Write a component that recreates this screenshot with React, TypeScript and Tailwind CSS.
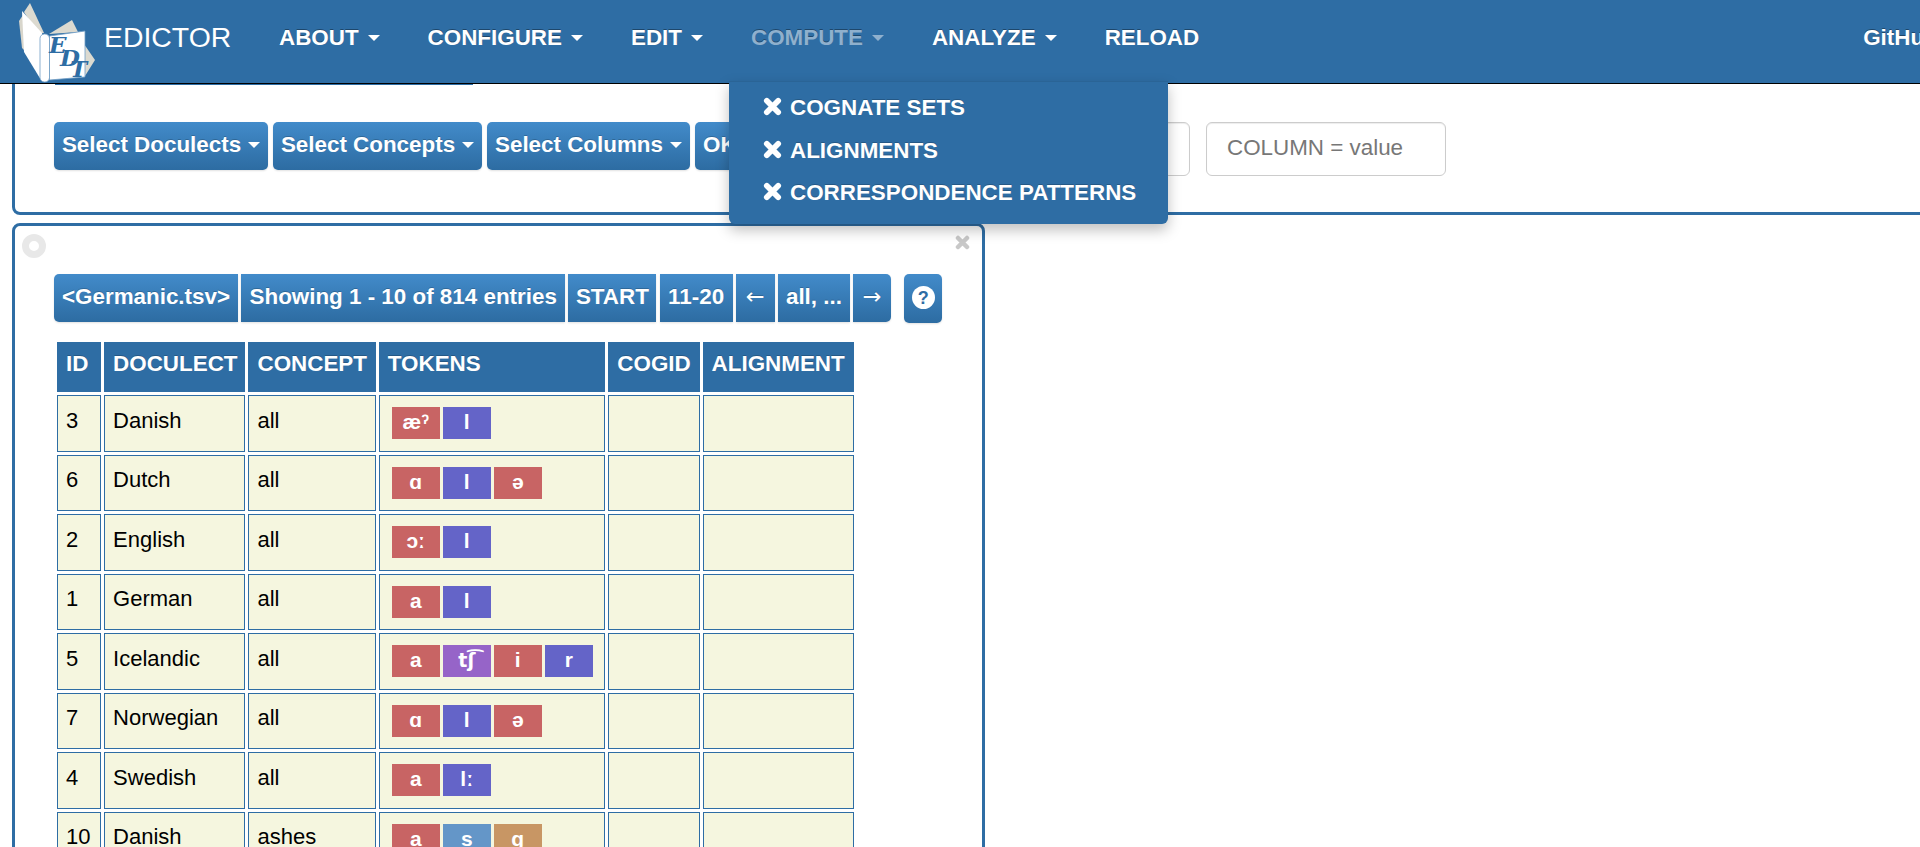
const sans = "font-['Liberation_Sans',Arial,sans-serif]";

type Tok = { t: string; c: string };
const R = "bg-[#c86464]";
const B = "bg-[#6464c8]";
const P = "bg-[#9664c8]";
const S = "bg-[#6496c8]";
const Q = "bg-[#c89664]";

const rows: { id: string; doc: string; con: string; toks: Tok[] }[] = [
  { id: "3", doc: "Danish", con: "all", toks: [{ t: "æˀ", c: R }, { t: "l", c: B }] },
  { id: "6", doc: "Dutch", con: "all", toks: [{ t: "ɑ", c: R }, { t: "l", c: B }, { t: "ə", c: R }] },
  { id: "2", doc: "English", con: "all", toks: [{ t: "ɔː", c: R }, { t: "l", c: B }] },
  { id: "1", doc: "German", con: "all", toks: [{ t: "a", c: R }, { t: "l", c: B }] },
  { id: "5", doc: "Icelandic", con: "all", toks: [{ t: "a", c: R }, { t: "tʃ͡", c: P }, { t: "i", c: R }, { t: "r", c: B }] },
  { id: "7", doc: "Norwegian", con: "all", toks: [{ t: "ɑ", c: R }, { t: "l", c: B }, { t: "ə", c: R }] },
  { id: "4", doc: "Swedish", con: "all", toks: [{ t: "a", c: R }, { t: "lː", c: B }] },
  { id: "10", doc: "Danish", con: "ashes", toks: [{ t: "a", c: R }, { t: "s", c: S }, { t: "ɡ", c: Q }] },
];

function Caret({ className = "border-t-white" }: { className?: string }) {
  return <span className={`inline-block w-0 h-0 border-x-[6px] border-x-transparent border-t-[6px] ${className}`} />;
}

function NavItem({ label, caret = true, muted = false }: { label: string; caret?: boolean; muted?: boolean }) {
  return (
    <a className={`flex items-center gap-[9px] px-[24px] pt-[22px] leading-[32px] h-[54px] font-bold text-[22.4px] whitespace-nowrap shrink-0 ${muted ? "text-[#8fb0cd]" : "text-white"} [text-shadow:0_-1px_0_rgba(0,0,0,0.35)]`}>
      {label}
      {caret && <Caret className={muted ? "border-t-[#8fb0cd]" : "border-t-white"} />}
    </a>
  );
}

function Logo() {
  return (
    <svg viewBox="0 0 100 84" className="w-[100px] h-[84px] shrink-0">
      <polygon points="30,3 44,33 38,34 24,12" fill="#dcdad0" />
      <polygon points="19,21 23,15 26,52 22,48" fill="#d8d6cc" />
      <polygon points="49,34 72,20 78,32" fill="#dcdad0" />
      <polygon points="84,44 95,60 85,76" fill="#dcdad0" />
      <polygon points="22,11 42,33 41,80 24,52" fill="#ffffff" />
      <rect x="40" y="34" width="9.5" height="48" rx="4.5" fill="#ffffff" stroke="#6f9cc4" strokeWidth="0.8" />
      <polygon points="49.5,36 85,31 85,77 49.5,80" fill="#ffffff" stroke="#6f9cc4" strokeWidth="0.8" />
      <g fontFamily="'DejaVu Serif', serif" fontWeight="700" fontStyle="italic" fontSize="23" fill="#2e6da4">
        <text x="49" y="53">E</text>
        <text x="60" y="66">D</text>
        <text x="70" y="77">T</text>
      </g>
    </svg>
  );
}

function Cross({ className }: { className: string }) {
  return (
    <svg viewBox="0 0 20 20" className={className}>
      <path d="M4 4 L16 16 M16 4 L4 16" stroke="currentColor" strokeWidth="6" strokeLinecap="round" fill="none" />
    </svg>
  );
}

const btn =
  "flex items-center justify-center h-[48px] pb-[2px] bg-gradient-to-b from-[#428bca] to-[#2d6ca2] text-white font-bold text-[22.4px] [text-shadow:0_-1px_0_rgba(0,0,0,0.2)] shadow-[0_1px_2px_rgba(0,0,0,0.12)] whitespace-nowrap shrink-0";

const arrow = "font-['DejaVu_Sans',sans-serif] !font-normal";

function SelectBtn({ label, w }: { label: string; w: string }) {
  return (
    <div className={`${btn} ${w} gap-[7px] rounded-[5px]`}>
      {label}
      <Caret />
    </div>
  );
}

const th = "bg-[#2e6da4] text-white font-bold text-[22.4px] text-left align-top pt-[4px] pl-[8px] border border-[#2e6da4] [text-shadow:0_-1px_0_rgba(0,0,0,0.2)] whitespace-nowrap";
const td = "bg-[#f5f6df] border border-[#2e6da4] text-[22px] text-black pl-[8px] pb-[6px] align-middle whitespace-nowrap";

export default function App() {
  return (
    <div className={`relative w-[1920px] h-[847px] overflow-hidden bg-white ${sans}`}>
      <nav className="flex items-start h-[84px] bg-[#2e6da4] border-b border-black overflow-hidden">
        <div className="flex items-start w-[255px] shrink-0">
          <Logo />
          <span className="ml-[4px] mt-[18px] text-[28.4px] leading-[38px] font-light text-white">EDICTOR</span>
        </div>
        <NavItem label="ABOUT" />
        <NavItem label="CONFIGURE" />
        <NavItem label="EDIT" />
        <NavItem label="COMPUTE" muted />
        <NavItem label="ANALYZE" />
        <NavItem label="RELOAD" caret={false} />
        <div className="ml-[616px]">
          <NavItem label="GitHub" caret={false} />
        </div>
      </nav>

      <div className="ml-3 -mr-4 h-[131px] border-x-[3px] border-b-[3px] border-[#2e6da4] rounded-b-[8px]">
        <div className="ml-[40px] w-[418px] h-[1px] bg-[#2e6da4]" />
        <div className="flex items-start ml-[39px] mt-[37px]">
          <SelectBtn label="Select Doculects" w="w-[214px]" />
          <div className="w-[5px] shrink-0" />
          <SelectBtn label="Select Concepts" w="w-[209px]" />
          <div className="w-[5px] shrink-0" />
          <SelectBtn label="Select Columns" w="w-[203px]" />
          <div className="w-[5px] shrink-0" />
          <div className={`${btn} w-[100px] rounded-[5px] !justify-start pl-[8px]`}>OK</div>
          <input
            placeholder="Filter"
            className="ml-[103px] w-[292px] h-[54px] shrink-0 border border-[#ccc] rounded-[6px] px-[20px] pb-[2px] text-[22.4px] outline-none shadow-[inset_0_1px_1px_rgba(0,0,0,0.075)] placeholder:text-[#777]"
          />
          <input
            placeholder="COLUMN = value"
            className="ml-[16px] w-[240px] h-[54px] shrink-0 border border-[#ccc] rounded-[6px] px-[20px] pb-[2px] text-[22.4px] outline-none shadow-[inset_0_1px_1px_rgba(0,0,0,0.075)] placeholder:text-[#777]"
          />
        </div>
      </div>

      <div className="relative ml-3 mt-2 w-[973px] h-[640px] border-[3px] border-[#2e6da4] rounded-[8px] pl-[39px] pt-[48px]">
        <div className="absolute left-[7px] top-[8px] w-[24px] h-[24px] rounded-full border-[7px] border-[#e8e8e8] bg-white" />
        <Cross className="absolute left-[940px] top-[9px] w-[15px] h-[15px] text-[#c8c8c8]" />

        <div className="flex items-start">
          <div className="flex gap-[3.2px]">
            <div className={`${btn} w-[184px] rounded-l-[5px]`}>&lt;Germanic.tsv&gt;</div>
            <div className={`${btn} w-[324px]`}>Showing 1 - 10 of 814 entries</div>
            <div className={`${btn} w-[88px]`}>START</div>
            <div className={`${btn} w-[73px]`}>11-20</div>
            <div className={`${btn} ${arrow} w-[39px]`}>←</div>
            <div className={`${btn} w-[72px]`}>all, ...</div>
            <div className={`${btn} ${arrow} w-[38px] rounded-r-[5px]`}>→</div>
          </div>
          <div className={`${btn} ml-[13px] w-[38px] !h-[49px] rounded-[5px]`}>
            <span className="flex items-center justify-center w-[23px] h-[23px] rounded-full bg-white text-[#2e6da4] text-[18px] font-bold leading-none [text-shadow:none]">?</span>
          </div>
        </div>

        <table className="mt-[16px] border-separate border-spacing-[3.2px] table-fixed w-[803px]">
          <thead>
            <tr className="h-[50px]">
              <th className={`${th} w-[44px]`}>ID</th>
              <th className={`${th} w-[141px]`}>DOCULECT</th>
              <th className={`${th} w-[127px]`}>CONCEPT</th>
              <th className={`${th} w-[226px]`}>TOKENS</th>
              <th className={`${th} w-[91px]`}>COGID</th>
              <th className={`${th} w-[151px]`}>ALIGNMENT</th>
            </tr>
          </thead>
          <tbody>
            {rows.map((r) => (
              <tr key={r.id} className="h-[56.5px]">
                <td className={td}>{r.id}</td>
                <td className={td}>{r.doc}</td>
                <td className={td}>{r.con}</td>
                <td className={`${td} !pl-[12px] !pb-0`}>
                  <div className="flex gap-[3px]">
                    {r.toks.map((k, i) => (
                      <span
                        key={i}
                        className={`${k.c} w-[48px] h-[32px] flex items-start justify-center text-white font-bold leading-[30px] ${k.t === "tʃ͡" ? "font-['DejaVu_Sans',sans-serif] text-[19px]" : "text-[21px]"}`}
                      >
                        {k.t}
                      </span>
                    ))}
                  </div>
                </td>
                <td className={td} />
                <td className={td} />
              </tr>
            ))}
          </tbody>
        </table>
      </div>

      <div className="absolute left-[729px] top-[81px] w-[439px] h-[143px] bg-[#2e6da4] rounded-b-[6px] border-t border-[#2a6496] shadow-[0_6px_14px_rgba(0,0,0,0.25)] pt-[5px] pl-[34px] text-white font-bold text-[22.4px]">
        {["COGNATE SETS", "ALIGNMENTS", "CORRESPONDENCE PATTERNS"].map((s) => (
          <div key={s} className="flex items-center gap-[8px] h-[42.5px] whitespace-nowrap [text-shadow:0_-1px_0_rgba(0,0,0,0.2)]">
            <Cross className="w-[19px] h-[19px] text-white -mt-[3px]" />
            {s}
          </div>
        ))}
      </div>
    </div>
  );
}
